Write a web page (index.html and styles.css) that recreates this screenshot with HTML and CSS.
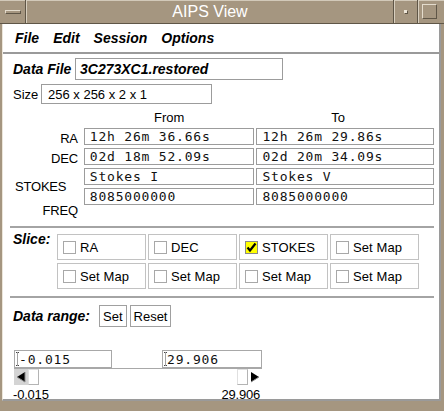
FILE: index.html
```html
<!DOCTYPE html>
<html>
<head>
<meta charset="utf-8">
<title>AIPS View</title>
<link rel="stylesheet" href="styles.css">
</head>
<body>
<div class="titlebar">
  <div class="tb-menu"><span class="dash"></span></div>
  <div class="tb-title">AIPS View</div>
  <div class="tb-btn"><span class="dot"></span></div>
  <div class="tb-btn tb-max"><span class="sq"></span></div>
</div>
<div class="frame">
  <div class="client">
    <div class="menubar">
      <span>File</span><span>Edit</span><span>Session</span><span>Options</span>
    </div>
    <div class="panel">
      <div class="row file-row">
        <span class="bi file-label">Data File</span>
        <div class="field file-field bi">3C273XC1.restored</div>
      </div>
      <div class="row size-row">
        <span class="lbl size-label">Size</span>
        <div class="field size-field">256 x 256 x 2 x 1</div>
      </div>
      <div class="coords">
        <div class="coord-labels">
          <span class="cl cl-ra">RA</span>
          <span class="cl cl-dec">DEC</span>
          <span class="cl cl-stokes">STOKES</span>
          <span class="cl cl-freq">FREQ</span>
        </div>
        <div class="coord-col col-from">
          <div class="col-head">From</div>
          <div class="mono-field">12h 26m 36.66s</div>
          <div class="mono-field">02d 18m 52.09s</div>
          <div class="mono-field">Stokes I</div>
          <div class="mono-field">8085000000</div>
        </div>
        <div class="coord-col col-to">
          <div class="col-head head-to">To</div>
          <div class="mono-field">12h 26m 29.86s</div>
          <div class="mono-field">02d 20m 34.09s</div>
          <div class="mono-field">Stokes V</div>
          <div class="mono-field">8085000000</div>
        </div>
      </div>
      <div class="sep"></div>
      <div class="slice">
        <span class="bi slice-label">Slice:</span>
        <div class="slice-grid">
          <div class="cell"><span class="cb"></span>RA</div>
          <div class="cell"><span class="cb"></span>DEC</div>
          <div class="cell"><span class="cb checked"><svg width="11" height="11" viewBox="0 0 11 11"><path d="M1.5 5.5 L4 8.5 L9.5 1.5" fill="none" stroke="#000" stroke-width="2.2"/></svg></span>STOKES</div>
          <div class="cell"><span class="cb"></span>Set Map</div>
          <div class="cell"><span class="cb"></span>Set Map</div>
          <div class="cell"><span class="cb"></span>Set Map</div>
          <div class="cell"><span class="cb"></span>Set Map</div>
          <div class="cell"><span class="cb"></span>Set Map</div>
        </div>
      </div>
      <div class="sep"></div>
      <div class="range-row">
        <span class="bi range-label">Data range:</span>
        <button class="btn">Set</button>
        <button class="btn">Reset</button>
      </div>
      <div class="range-widget">
        <div class="range-fields">
          <div class="rfield rfield-min"><svg class="caret" width="3" height="14" viewBox="0 0 3 14"><path d="M0 0.5H3M1.5 0.5V13.5M0 13.5H3" stroke="#444" stroke-width="1" stroke-dasharray="1 1" fill="none"/></svg>-0.015</div>
          <div class="rfield rfield-max"><svg class="caret" width="3" height="14" viewBox="0 0 3 14"><path d="M0 0.5H3M1.5 0.5V13.5M0 13.5H3" stroke="#444" stroke-width="1" stroke-dasharray="1 1" fill="none"/></svg>29.906</div>
        </div>
        <div class="scrollbar">
          <div class="arrow arrow-left"><svg width="14" height="14" viewBox="0 0 14 14"><polygon points="3,7 11,2 11,12" fill="#000"/><polyline points="11,2 11,12 3,7" fill="none" stroke="#888" stroke-width="1"/></svg></div>
          <div class="thumb"></div>
          <div class="track"></div>
          <div class="thumb"></div>
          <div class="arrow arrow-right"><svg width="14" height="14" viewBox="0 0 14 14"><polygon points="11,7 3,2 3,12" fill="#000"/><polyline points="3,12 11,7" fill="none" stroke="#888" stroke-width="1"/></svg></div>
        </div>
        <div class="range-labels">
          <span>-0.015</span>
          <span>29.906</span>
        </div>
      </div>
    </div>
  </div>
</div>
</body>
</html>
```

FILE: styles.css
```css
html, body {
  margin: 0;
  padding: 0;
}
body {
  width: 444px;
  height: 411px;
  overflow: hidden;
  background: #a59680;
  font-family: "Liberation Sans", Arial, sans-serif;
  font-size: 13px;
  color: #000;
}

/* title bar */
.titlebar {
  display: flex;
  height: 23px;
  border-bottom: 1px solid #5f5647;
  box-shadow: inset 0 1px 0 #d2c9b9;
}
.tb-menu {
  width: 25px;
  border-right: 1px solid #5f5647;
  display: flex;
  align-items: center;
  justify-content: center;
}
.dash {
  width: 14px;
  height: 2px;
  border: 1px solid;
  border-color: #e4dccd #5f5647 #5f5647 #e4dccd;
}
.tb-title {
  flex: 1;
  border-left: 1px solid #d8cfbf;
  text-align: center;
  color: #fff;
  font-size: 16px;
  line-height: 23px;
}
.tb-btn {
  width: 23px;
  border-left: 1px solid #5f5647;
  box-shadow: inset 1px 0 0 #d8cfbf;
  display: flex;
  align-items: center;
  justify-content: center;
}
.tb-max {
  margin-right: 3px;
}
.dot {
  width: 3px;
  height: 3px;
  background: #ece5d8;
  box-shadow: 1px 1px 0 #5f5647;
}
.sq {
  width: 13px;
  height: 13px;
  border: 1px solid;
  border-color: #e4dccd #5f5647 #5f5647 #e4dccd;
}

/* frame & client */
.frame {
  display: flex;
  padding: 0 3px 0 2px;
}
.client {
  flex: 1;
  height: 377px;
  box-sizing: border-box;
  background: #fff;
  border-left: 1px solid #ece6da;
  border-right: 2px solid #9a9a9a;
  border-bottom: 2px solid #9a9a9a;
  overflow: hidden;
}
.menubar {
  height: 28px;
  border-bottom: 2px solid #9a9a9a;
  display: flex;
  align-items: center;
  padding-left: 5px;
  font: italic bold 14px "Liberation Sans", Arial, sans-serif;
}
.menubar span {
  padding: 0 7px;
}

.panel {
  padding: 0 5px 0 10px;
}
.bi {
  font: italic bold 14px "Liberation Sans", Arial, sans-serif;
}
.row {
  display: flex;
  align-items: center;
  margin-top: 4px;
}
.field {
  box-sizing: border-box;
  border: 1px solid #9c9c9c;
  padding-left: 4px;
  display: flex;
  align-items: center;
}
.file-label {
  width: 62px;
}
.file-field {
  width: 208px;
  height: 22px;
}
.size-label {
  width: 28px;
}
.size-field {
  width: 171px;
  height: 20px;
  padding-left: 6px;
}

/* coordinates table */
.coords {
  display: flex;
  margin-top: 4px;
  height: 111px;
}
.coord-labels {
  width: 71px;
  padding-top: 20px;
  display: flex;
  flex-direction: column;
  align-items: flex-end;
  padding-right: 6px;
  box-sizing: border-box;
}
.cl {
  line-height: 16px;
  letter-spacing: -0.2px;
}
.cl-ra { margin-top: 3px; }
.cl-dec { margin-top: 4px; }
.cl-stokes { margin-top: 12px; align-self: flex-start; margin-left: 2px; }
.cl-freq { margin-top: 8px; }
.coord-col {
  display: flex;
  flex-direction: column;
}
.col-from {
  width: 171px;
  margin-right: 2px;
}
.col-to {
  width: 178px;
}
.col-head {
  height: 20px;
  line-height: 20px;
  text-align: center;
}
.head-to {
  padding-right: 14px;
}
.mono-field {
  box-sizing: border-box;
  height: 17px;
  border: 1px solid #9c9c9c;
  margin-bottom: 3px;
  padding-left: 5px;
  font-family: "DejaVu Sans Mono", monospace;
  font-size: 13px;
  letter-spacing: 0.8px;
  line-height: 15px;
  color: #111;
  white-space: pre;
}

.sep {
  height: 2px;
  background: #a4a4a4;
  margin: 7px 0 0 -3px;
}

/* slice */
.slice {
  display: flex;
  align-items: flex-start;
  padding-top: 6px;
}
.slice-label {
  width: 44px;
  line-height: 16px;
  margin-top: -3px;
}
.slice-grid {
  display: grid;
  grid-template-columns: repeat(4, 89px);
  grid-auto-rows: 26px;
  column-gap: 2px;
  row-gap: 3px;
}
.cell {
  box-sizing: border-box;
  border: 1px solid #c2c2c2;
  display: flex;
  align-items: center;
  padding-left: 5px;
  letter-spacing: 0.1px;
}
.cb {
  box-sizing: border-box;
  width: 13px;
  height: 13px;
  border: 1px solid #a8a8a8;
  background: #fff;
  margin-right: 4px;
  display: flex;
  align-items: center;
  justify-content: center;
}
.cb.checked {
  background: #ffff00;
  border-color: #8a8a8a;
}

/* data range */
.range-row {
  display: flex;
  align-items: center;
  padding-top: 7px;
}
.range-label {
  width: 86px;
}
.btn {
  font: 13px "Liberation Sans", Arial, sans-serif;
  height: 22px;
  padding: 0 3px;
  margin: 0 3px 0 0;
  border: 1px solid #a0a0a0;
  background: #fff;
  color: #000;
  border-radius: 0;
}

.range-widget {
  width: 248px;
  margin: 23px 0 0 1px;
}
.range-fields {
  display: flex;
  justify-content: space-between;
}
.rfield {
  box-sizing: border-box;
  height: 18px;
  border: 1px solid #a8a8a8;
  display: flex;
  align-items: center;
  padding-left: 1px;
  font-family: "DejaVu Sans Mono", monospace;
  font-size: 13px;
  letter-spacing: 0.8px;
  color: #111;
}
.rfield-min { width: 98px; }
.rfield-max { width: 100px; }
.scrollbar {
  display: flex;
  height: 16px;
  border-top: 1px solid #a8a8a8;
}
.arrow {
  width: 14px;
  display: flex;
  align-items: center;
  justify-content: center;
}
.arrow-left {
  background: #d4d4d4;
}
.thumb {
  box-sizing: border-box;
  width: 11px;
  background: #fff;
  border: 1px solid #b4b4b4;
  border-top-color: #e0e0e0;
  border-left-color: #e0e0e0;
}
.track {
  flex: 1;
}
.range-labels {
  display: flex;
  justify-content: space-between;
  margin: 3px 2px 0 -1px;
  line-height: 14px;
  letter-spacing: -0.2px;
}
```
